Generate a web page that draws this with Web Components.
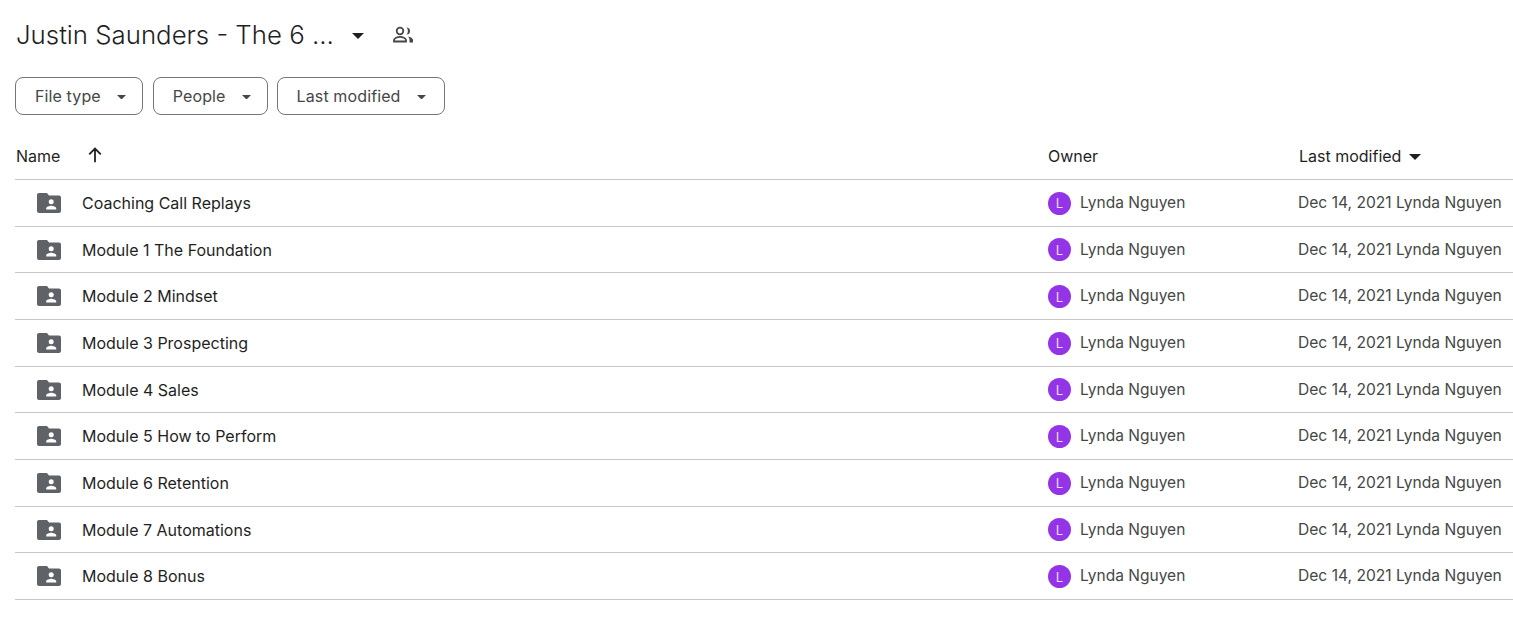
<!DOCTYPE html>
<html>
<head>
<meta charset="utf-8">
<title>Justin Saunders - The 6</title>
<style>
  html, body { margin: 0; background: #fff; }
  body { font-family: Inter, Roboto, "Liberation Sans", sans-serif; }
</style>
</head>
<body>
<drive-folder title="Justin Saunders - The 6 ..."></drive-folder>

<script>
const CARET = `<svg width="10" height="5" viewBox="0 0 10 5"><path d="M0 0l5 5 5-5z" fill="currentColor"/></svg>`;

class FilterChip extends HTMLElement {
  constructor() {
    super();
    this.attachShadow({ mode: "open" }).innerHTML = /*html*/`
<style>
  :host {
    display: inline-flex;
    align-items: center;
    box-sizing: border-box;
    height: 38px;
    padding: 0 16px 1px 19px;
    border: 1px solid #747775;
    border-radius: 8px;
    color: #444746;
    font-size: 16px;
    letter-spacing: .12px;
  }
  svg { margin-left: 16px; width: 9px; height: 4.5px; margin-top: 3px; }
</style>
<slot></slot>${CARET}`;
  }
}
customElements.define('filter-chip', FilterChip);

class FolderRow extends HTMLElement {
  constructor() {
    super();
    this.attachShadow({ mode: "open" }).innerHTML = /*html*/`
<style>
  :host {
    display: grid;
    grid-template-columns: 1032px 251px 1fr;
    align-items: center;
    box-sizing: border-box;
    height: 46.67px;
    border-bottom: 1px solid #c7c7c7;
    font-size: 15.5px;
    color: #444746;
    white-space: nowrap;
  }
  .name { display: flex; align-items: center; color: #1f1f1f; padding: .5px 0 0 22px; font-size: 16px; }
  .name svg { width: 24px; height: 24px; margin-right: 21px; flex: none; }
  .owner { display: flex; align-items: center; gap: 9px; padding: 0 0 .6px 1px; }
  .owner span:last-child { letter-spacing: .02px; }
  .avatar {
    width: 23px; height: 23px; border-radius: 50%;
    background: #9334e6; color: #eadcfb;
    font-size: 13px; display: flex; align-items: center; justify-content: center;
    margin-top: 1.6px;
  }
  .modified { font-size: 15.6px; padding-bottom: .6px; }
</style>
<div class="name">
  <svg viewBox="0 0 24 24"><path fill="#5f6368" d="M0 4C0 2.900.900 2 2 2h8l2 2.400h10c1.100 0 2 .900 2 2V20c0 1.100-.900 2-2 2H2c-1.100 0-2-.900-2-2z"/><circle cx="14.200" cy="10.800" r="2.500" fill="#fff"/><path fill="#fff" d="M9.200 18.500v-1.100c0-1.700 3.300-2.600 5-2.600s5 .900 5 2.600v1.100z"/></svg>
  <span><slot></slot></span>
</div>
<div class="owner"><span class="avatar">L</span><span>Lynda Nguyen</span></div>
<div class="modified">Dec 14, 2021 Lynda Nguyen</div>`;
  }
}
customElements.define('folder-row', FolderRow);

class DriveFolder extends HTMLElement {
  constructor() {
    super();
    const rows = ['Coaching Call Replays', 'Module 1 The Foundation', 'Module 2 Mindset', 'Module 3 Prospecting',
      'Module 4 Sales', 'Module 5 How to Perform', 'Module 6 Retention', 'Module 7 Automations', 'Module 8 Bonus'];
    this.attachShadow({ mode: "open" }).innerHTML = /*html*/`
<style>
  :host { display: block; padding: 0 0 0 15px; }
  .title { display: flex; align-items: center; height: 70px; color: #1f1f1f; font-size: 25.8px; font-weight: 300; padding-left: 1px; }
  .title span { margin-top: -2px; }
  .title .caret { margin-left: 18px; width: 12px; height: 6px; margin-top: 2px; }
  .title .people { margin-left: 27px; color: #444746; }
  .chips { display: flex; gap: 10px; margin-top: 7px; }
  .chips .wide { padding-right: 18px; margin-left: -1px; }
  .head {
    display: grid;
    grid-template-columns: 1032px 251px 1fr;
    align-items: center;
    box-sizing: border-box;
    height: 65px;
    padding-top: 18px;
    border-bottom: 1px solid #c7c7c7;
    font-size: 16px;
    color: #1f1f1f;
    padding-left: 1px;
    white-space: nowrap;
  }
  .head > div { display: flex; align-items: center; }
  .head .up { margin-left: 25px; width: 20px; height: 20px; margin-top: -2px; }
  .head .sort { margin-left: 8px; width: 12px; height: 6px; margin-top: 2px; }
</style>
<div class="title">
  <span>${this.getAttribute('title')}</span>
  <svg class="caret" viewBox="0 0 10 5"><path d="M0 0l5 5 5-5z" fill="currentColor"/></svg>
  <svg class="people" width="24" height="24" viewBox="0 0 24 24"><g fill="none" stroke="currentColor" stroke-width="1.800"><circle cx="9" cy="8" r="3.300"/><path d="M3 18.500v-1.400c0-2 3.600-3.200 6-3.200s6 1.200 6 3.200v1.400z"/></g><path fill="currentColor" d="M15.500 4.500a3.500 3.500 0 0 1 0 7 5 5 0 0 0 0-7zM17 13.500c2.500.4 5 1.500 5 3.500v2.400h-3.500V17c0-1.400-.6-2.600-1.500-3.500z"/></svg>
</div>
<div class="chips">
  <filter-chip>File type</filter-chip>
  <filter-chip>People</filter-chip>
  <filter-chip class="wide">Last modified</filter-chip>
</div>
<div class="head">
  <div>Name<svg class="up" viewBox="0 0 18 18"><path d="M9 15.500V3.500M3.800 8.500L9 3.200l5.200 5.300" fill="none" stroke="currentColor" stroke-width="1.600"/></svg></div>
  <div>Owner</div>
  <div>Last modified<svg class="sort" viewBox="0 0 10 5"><path d="M0 0l5 5 5-5z" fill="currentColor"/></svg></div>
</div>
${rows.map(r => `<folder-row>${r}</folder-row>`).join('')}`;
  }
}
customElements.define('drive-folder', DriveFolder);
</script>
</body>
</html>
